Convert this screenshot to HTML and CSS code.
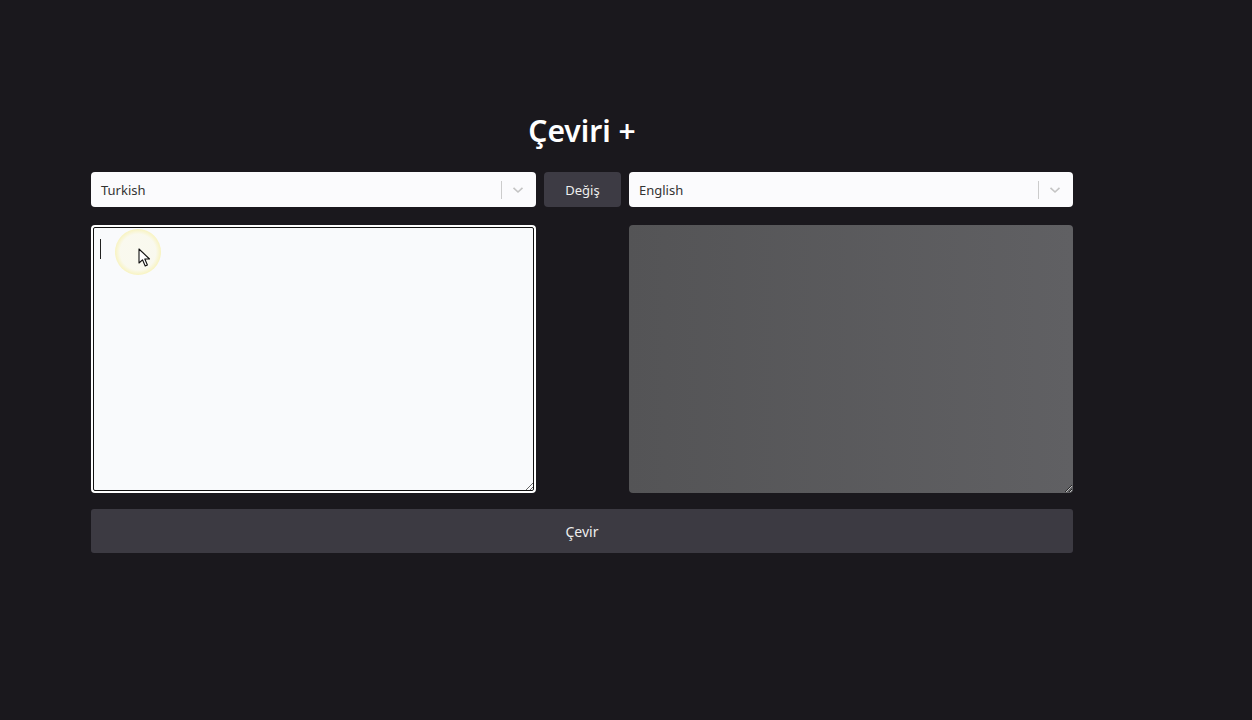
FILE: index.html
```html
<!DOCTYPE html>
<html lang="tr">
<head>
  <meta charset="UTF-8">
  <title>Çeviri +</title>
  <link rel="stylesheet" href="styles.css">
</head>
<body>
  <div class="container">
    <h1 class="title">Çeviri +</h1>

    <div class="lang-row">
      <div class="lang-select">
        <span class="lang-value">Turkish</span>
        <span class="sep"></span>
        <svg class="chevron" width="12" height="8" viewBox="0 0 12 8"><path d="M1.5 1.8 L6 6 L10.5 1.8" fill="none" stroke="#c4c4c4" stroke-width="1.6"/></svg>
      </div>
      <button class="swap-btn">Değiş</button>
      <div class="lang-select">
        <span class="lang-value">English</span>
        <span class="sep"></span>
        <svg class="chevron" width="12" height="8" viewBox="0 0 12 8"><path d="M1.5 1.8 L6 6 L10.5 1.8" fill="none" stroke="#c4c4c4" stroke-width="1.6"/></svg>
      </div>
    </div>

    <div class="text-row">
      <div class="source-wrap">
        <textarea class="source"></textarea>
        <span class="caret"></span>
        <span class="click-ring"></span>
        <svg class="pointer" width="14" height="20" viewBox="0 0 14 20"><path d="M1 1 L1 15 L4.5 11.8 L7.2 18 L9.4 17 L6.8 11 L11.5 11 Z" fill="#fff" stroke="#111" stroke-width="1.1" stroke-linejoin="round"/></svg>
      </div>
      <div></div>
      <textarea class="target" readonly></textarea>
    </div>

    <button class="translate-btn">Çevir</button>
  </div>
</body>
</html>
```

FILE: styles.css
```css
/* Base */
body {
  margin: 0;
  background-color: #1a181d;
  font-family: 'Noto Sans', 'Open Sans', sans-serif;
  color: #fff;
}

.container {
  width: 982px;
  margin: 0 auto;
  padding-top: 111px;
  transform: translateX(-44px);
}

.title {
  margin: 0 0 21px;
  text-align: center;
  font-size: 30px;
  font-weight: 600;
  line-height: 40px;
}

/* Language row */
.lang-row {
  display: grid;
  grid-template-columns: 445px 77px 444px;
  gap: 8px;
  height: 33px;
}

.lang-select {
  display: flex;
  align-items: center;
  background: #fbfbfd;
  border-radius: 4px;
  padding: 0 10px;
  color: #333;
  font-size: 13px;
}

.lang-value {
  flex: 1;
}

.sep {
  width: 1px;
  height: 18px;
  background: #ccc;
  margin-right: 10px;
}

.chevron {
  margin-right: 2px;
}

.swap-btn {
  background: #3d3b44;
  color: #eee;
  border: none;
  border-radius: 4px;
  font-family: inherit;
  font-size: 13px;
  height: 35px;
}

/* Text areas */
.text-row {
  display: grid;
  grid-template-columns: 445px 77px 444px;
  gap: 8px;
  margin-top: 20px;
  height: 268px;
}

textarea {
  box-sizing: border-box;
  width: 100%;
  height: 100%;
  border-radius: 4px;
  font-family: inherit;
  font-size: 14px;
  margin: 0;
}

.source-wrap {
  position: relative;
}

.source {
  background: #f9fafc;
  border: 2px solid #fff;
  outline: 1px solid #111;
  outline-offset: -3px;
}

.target {
  background: linear-gradient(90deg, #545456, #606063);
  border: none;
}

.caret {
  position: absolute;
  left: 9px;
  top: 14px;
  width: 1px;
  height: 20px;
  background: #222;
}

.click-ring {
  position: absolute;
  left: 24px;
  top: 4px;
  width: 46px;
  height: 46px;
  border-radius: 50%;
  background: radial-gradient(circle, rgba(250, 248, 225, 0.5) 55%, rgba(248, 242, 180, 0.8) 70%, rgba(248, 242, 180, 0.2) 100%);
}

.pointer {
  position: absolute;
  left: 47px;
  top: 23px;
}

/* Translate button */
.translate-btn {
  display: block;
  width: 100%;
  height: 44px;
  margin-top: 16px;
  background: #3c3a42;
  color: #eee;
  border: none;
  border-radius: 3px;
  font-family: inherit;
  font-size: 14px;
}
```
